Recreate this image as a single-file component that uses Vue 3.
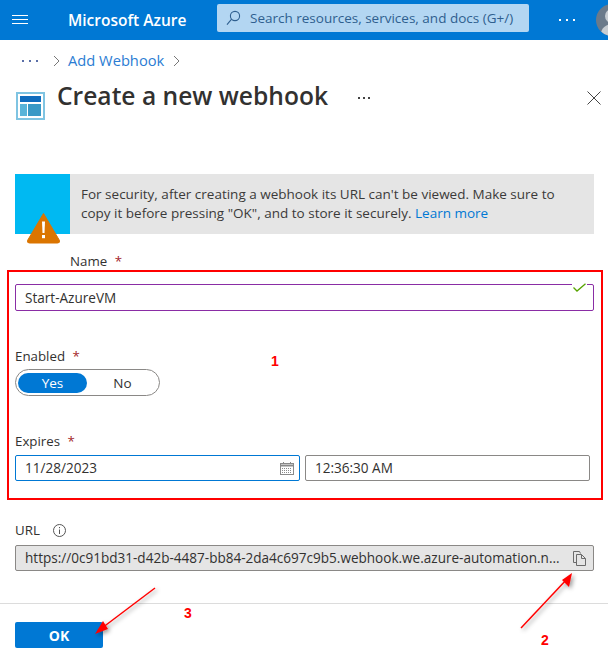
<script setup>
const bannerText = 'For security, after creating a webhook its URL can\'t be viewed. Make sure to copy it before pressing "OK", and to store it securely.'
const webhookUrl = 'https://0c91bd31-d42b-4487-bb84-2da4c697c9b5.webhook.we.azure-automation.n...'
</script>

<template>
  <div class="page">
    <header class="topbar">
      <svg class="menu-icon" width="16" height="10" viewBox="0 0 16 10">
        <path d="M0 .5h16M0 4.500h16M0 8.500h16" stroke="#fff" stroke-width="1" fill="none" />
      </svg>
      <div class="brand">Microsoft Azure</div>
      <div class="search">
        <svg width="15" height="16" viewBox="0 0 15 16" fill="none" stroke="#2f5f8f" stroke-width="1.1">
          <circle cx="9" cy="6" r="4.600" />
          <path d="M5.600 9.200 1 14.600" />
        </svg>
        <span>Search resources, services, and docs (G+/)</span>
      </div>
      <div class="top-dots">
        <i></i><i></i><i></i>
      </div>
      <div class="avatar">
        <span class="avatar-head"></span>
        <span class="avatar-body"></span>
      </div>
    </header>

    <nav class="crumbs">
      <div class="crumb-dots"><i></i><i></i><i></i></div>
      <svg class="chev" width="7" height="12" viewBox="0 0 7 12"><path d="M1 1l5 5-5 5" /></svg>
      <a class="crumb-link">Add Webhook</a>
      <svg class="chev" width="7" height="12" viewBox="0 0 7 12"><path d="M1 1l5 5-5 5" /></svg>
    </nav>

    <div class="title-row">
      <svg class="blade-icon" width="29" height="28" viewBox="0 0 29 28">
        <rect width="29" height="28" fill="#7fc4e2" />
        <rect x="2" y="2" width="25" height="24" fill="#fff" />
        <rect x="4" y="4" width="21" height="6" fill="#0f6cbd" />
        <rect x="4" y="12" width="7" height="12" fill="#59b4d9" />
        <rect x="12" y="12" width="13" height="12" fill="#3999c6" />
      </svg>
      <h1>Create a new webhook</h1>
      <div class="title-dots"><i></i><i></i><i></i></div>
      <svg class="close" width="14" height="14" viewBox="0 0 14 14">
        <path d="M.5.5l13 13M13.500.5l-13 13" stroke="#444" stroke-width="1" fill="none" />
      </svg>
    </div>

    <div class="form">
      <section class="banner">
        <div class="banner-side"></div>
        <p><span>{{ bannerText }}</span> <a>Learn more</a></p>
        <svg class="warn" width="35" height="32" viewBox="0 0 35 32">
          <path d="M17.500 1.500 33.500 28.500Q34 31 31.500 31H3.500Q1 31 1.500 28.500Z" fill="#db7500" stroke="#db7500" stroke-linejoin="round" />
          <path d="M16 9.500h3l-.5 11.500h-2Z" fill="#fff" />
          <rect x="16" y="23" width="3" height="3.200" fill="#fff" />
        </svg>
      </section>

      <label class="label name-label">Name <b>*</b></label>
      <div class="name-field">
        <div class="input purple">Start-AzureVM</div>
        <svg class="check" width="13" height="9" viewBox="0 0 13 9">
          <path d="M.5 4.500 4 8 12.500.8" stroke="#57a300" stroke-width="1.300" fill="none" />
        </svg>
      </div>

      <label class="label enabled-label">Enabled <b>*</b></label>
      <div class="toggle">
        <span class="toggle-on">Yes</span>
        <span class="toggle-off">No</span>
      </div>

      <label class="label expires-label">Expires <b>*</b></label>
      <div class="date-row">
        <div class="input date">
          11/28/2023
          <svg width="14" height="13" viewBox="0 0 14 13" fill="none" stroke="#8a8a8a">
            <rect x=".5" y="1.500" width="13" height="11" />
            <path d="M.5 3.500h13" stroke-width="2" />
            <path d="M3.500 0v2M10.500 0v2" />
            <path d="M2 6.500h10M2 8.500h10M2 10.500h10" stroke-dasharray="1 1" />
          </svg>
        </div>
        <div class="input time">12:36:30 AM</div>
      </div>

      <label class="label url-label">
        URL
        <svg width="13" height="13" viewBox="0 0 13 13" fill="none" stroke="#555">
          <circle cx="6.500" cy="6.500" r="6" />
          <path d="M6.500 5.500v4.500M6.500 3v1.200" />
        </svg>
      </label>
      <div class="input url">
        <span>{{ webhookUrl }}</span>
        <svg width="13" height="15" viewBox="0 0 13 15" fill="none" stroke="#6b6b6b">
          <path d="M3.500 11.500H.5V.5h6l1 2" />
          <path d="M3.500 3.500h5l4 4v7h-9Z" fill="#e5e5e5" />
          <path d="M8.500 3.500v4h4" />
        </svg>
      </div>
    </div>

    <footer class="footer">
      <button class="ok">OK</button>
    </footer>

    <!-- annotations drawn on top of the screenshot -->
    <svg class="marks" width="608" height="658" viewBox="0 0 608 658">
      <defs>
        <filter id="shade" x="-30%" y="-30%" width="160%" height="160%">
          <feDropShadow dx="2" dy="2" stdDeviation="2" flood-color="#000" flood-opacity=".4" />
        </filter>
      </defs>
      <rect x="8" y="271" width="594" height="228" fill="none" stroke="#f00" stroke-width="2" />
      <g filter="url(#shade)">
        <path d="M521 628 568 578" stroke="#f00" stroke-width="1.500" fill="none" />
        <path d="M572 573 569 587 562 580Z" fill="#f00" />
        <path d="M155 588 102 628" stroke="#f00" stroke-width="1.500" fill="none" />
        <path d="M95 634 103 621 108 629Z" fill="#f00" />
      </g>
      <text x="271" y="366" class="mark-num">1</text>
      <text x="541" y="645" class="mark-num">2</text>
      <text x="184" y="618" class="mark-num">3</text>
    </svg>
  </div>
</template>

<style scoped>
.page {
  position: relative;
  width: 608px;
  height: 658px;
  overflow: hidden;
  background: #fff;
  color: #323130;
  font-family: "Open Sans", "Noto Sans", sans-serif;
  font-size: 13px;
}

.topbar {
  display: flex;
  align-items: center;
  height: 40px;
  background: #0078d4;
}

.menu-icon {
  margin-left: 12px;
  flex: none;
}

.brand {
  flex: none;
  margin-left: 40px;
  width: 149px;
  color: #fff;
  font-size: 15.500px;
  font-weight: 600;
  white-space: nowrap;
}

.search {
  display: flex;
  flex: none;
  align-items: center;
  gap: 9px;
  width: 312px;
  height: 28px;
  margin-top: -4px;
  padding-left: 9px;
  box-sizing: border-box;
  border-radius: 2px;
  background: #b3d6f2;
  color: #2f5f8f;
  font-size: 13.500px;
  white-space: nowrap;
}

.top-dots {
  display: flex;
  flex: none;
  gap: 5px;
  margin-left: 30px;
}

.top-dots i {
  width: 2px;
  height: 2px;
  background: #fff;
}

.avatar {
  position: relative;
  width: 32px;
  height: 32px;
  margin-left: 21px;
  flex: none;
  overflow: hidden;
  border-radius: 50%;
  background: #6b7a8a;
}

.avatar-head {
  position: absolute;
  left: 9px;
  top: 5px;
  width: 14px;
  height: 14px;
  border-radius: 50%;
  background: #c8cdd2;
}

.avatar-body {
  position: absolute;
  left: 5px;
  top: 20px;
  width: 22px;
  height: 20px;
  border-radius: 50%;
  background: #c8cdd2;
}

.crumbs {
  display: flex;
  align-items: center;
  height: 41px;
  padding-left: 22px;
}

.crumb-dots {
  display: flex;
  gap: 5px;
}

.crumb-dots i {
  width: 2px;
  height: 2px;
  background: #5a6fa8;
}

.chev {
  margin-left: 15px;
  fill: none;
  stroke: #777;
}

.crumb-link {
  margin-left: 8px;
  margin-right: -6px;
  margin-bottom: 2px;
  color: #2b7cd3;
  font-size: 14.700px;
}

.title-row {
  display: flex;
  align-items: flex-start;
  height: 93px;
  padding-left: 16px;
}

.blade-icon {
  flex: none;
  margin-top: 11px;
}

h1 {
  flex: none;
  margin: 0 0 0 12px;
  width: 301px;
  font-size: 24.600px;
  font-weight: 600;
  line-height: 30px;
  white-space: nowrap;
}

.title-dots {
  display: flex;
  gap: 3px;
  margin-top: 16px;
}

.title-dots i {
  width: 2px;
  height: 2px;
  background: #444;
}

.close {
  margin-left: 217px;
  margin-top: 10px;
}

.form {
  padding: 0 14px 0 15px;
}

.banner {
  position: relative;
  display: flex;
  height: 60px;
  background: #e5e5e5;
}

.banner-side {
  flex: none;
  width: 55px;
  background: #00b9f2;
}

.banner p {
  margin: 0;
  padding: 11px 30px 0 11px;
  font-size: 13.500px;
  line-height: 19px;
  color: #3b3a39;
}

.banner a {
  color: #0078d4;
}

.warn {
  position: absolute;
  left: 11px;
  top: 38px;
}

.label {
  display: block;
  font-size: 13.300px;
  line-height: 18px;
  color: #323130;
}

.label b {
  margin-left: 4px;
  color: #a4262c;
  font-weight: 400;
}

.name-label {
  margin-top: 18px;
  padding-left: 55px;
}

.name-field {
  position: relative;
  margin-top: 14px;
}

.input {
  display: flex;
  align-items: center;
  box-sizing: border-box;
  height: 27px;
  padding-left: 9px;
  border: 1px solid #8a8886;
  border-radius: 2px;
  background: #fff;
  font-size: 13.550px;
  white-space: nowrap;
}

.purple {
  border-color: #8a2da5;
}

.check {
  position: absolute;
  right: 7px;
  top: -1px;
  padding: 0 1px;
  background: #fff;
}

.enabled-label {
  margin-top: 36px;
}

.toggle {
  display: flex;
  align-items: center;
  box-sizing: border-box;
  width: 145px;
  height: 27px;
  margin-top: 4px;
  padding-left: 2px;
  border: 1px solid #8a8886;
  border-radius: 14px;
}

.toggle span {
  display: flex;
  align-items: center;
  justify-content: center;
  height: 20px;
  font-size: 13.500px;
}

.toggle-on {
  width: 69px;
  border-radius: 10px;
  background: #0078d4;
  color: #fff;
}

.toggle-off {
  width: 71px;
}

.expires-label {
  margin-top: 36px;
}

.date-row {
  display: flex;
  gap: 5px;
  margin-top: 5px;
  padding-right: 4px;
}

.date {
  flex: none;
  justify-content: space-between;
  width: 285px;
  height: 26px;
  padding-right: 5px;
  border-color: #0078d4;
}

.time {
  flex: 1;
  height: 26px;
}

.url-label {
  display: flex;
  align-items: center;
  gap: 13px;
  margin-top: 40px;
}

.url {
  justify-content: space-between;
  height: 26px;
  margin-top: 6px;
  padding-right: 7px;
  background: #e5e5e5;
}

.footer {
  margin-top: 32px;
  padding: 18px 15px 0;
  border-top: 1px solid #dcdcdc;
}

.ok {
  display: block;
  width: 88px;
  height: 26px;
  padding: 0;
  border: 0;
  border-radius: 2px;
  background: #0078d4;
  color: #fff;
  font-family: inherit;
  font-size: 14px;
  font-weight: 700;
}

.marks {
  position: absolute;
  left: 0;
  top: 0;
  pointer-events: none;
}

.mark-num {
  fill: #f00;
  font-family: "Liberation Sans", sans-serif;
  font-size: 14px;
  font-weight: 700;
}
</style>
